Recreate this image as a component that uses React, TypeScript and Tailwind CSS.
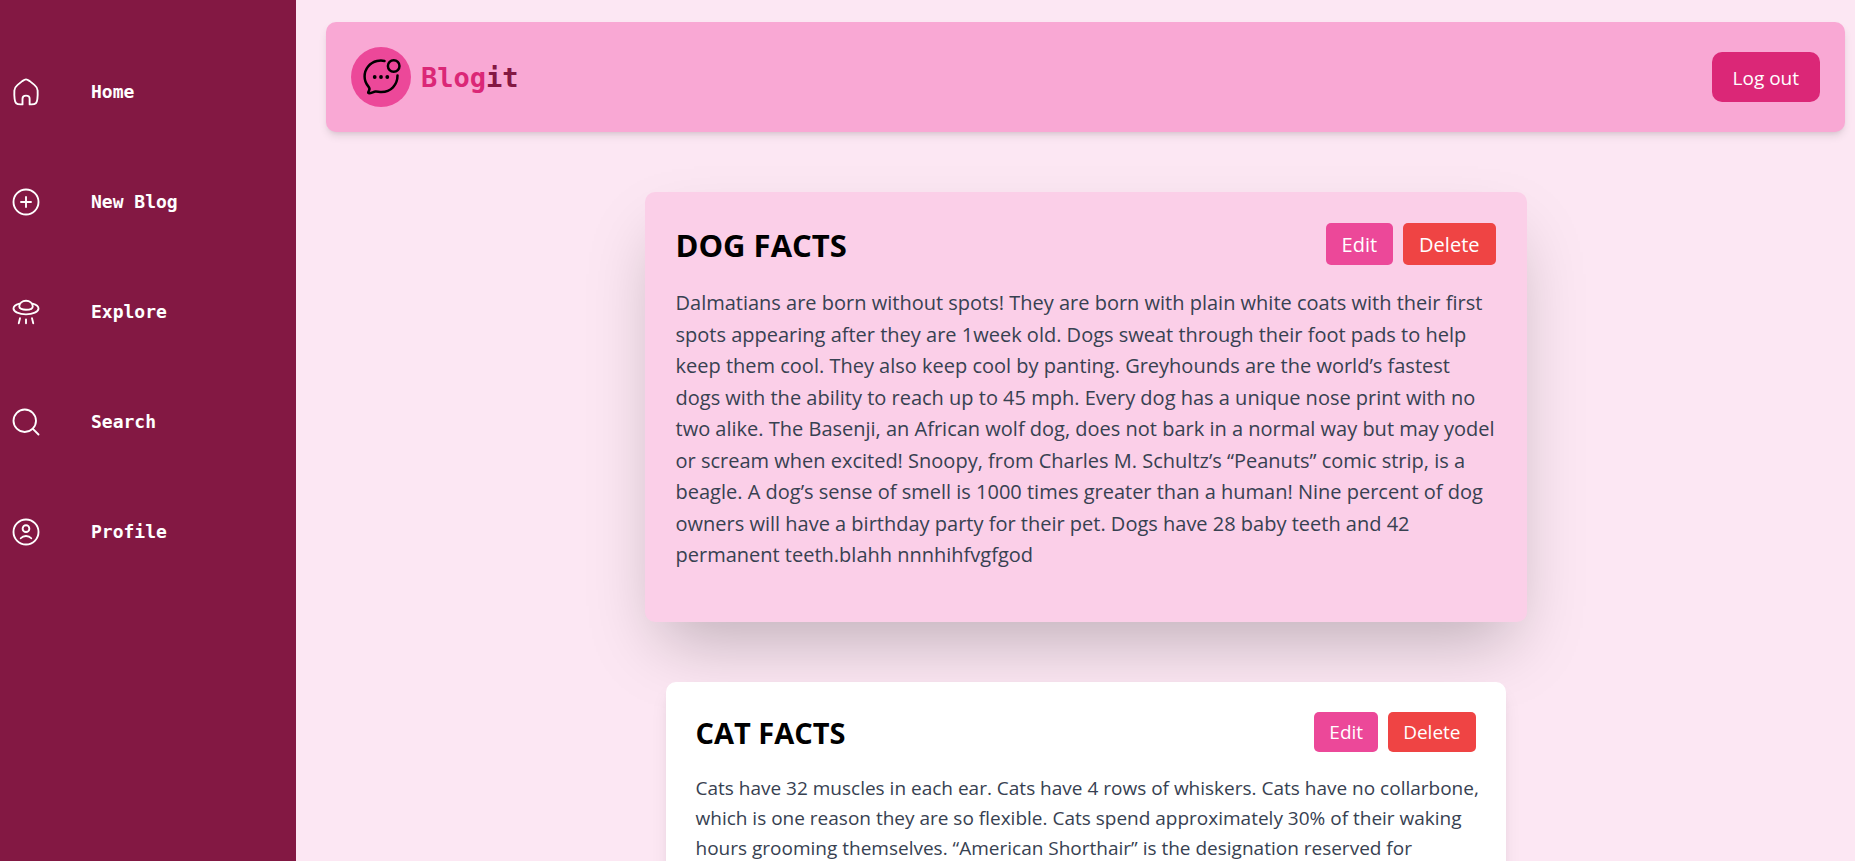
import type { ReactNode } from "react";

function Icon({ children }: { children: ReactNode }) {
  return (
    <svg
      className="size-[30px] shrink-0"
      viewBox="0 0 24 24"
      fill="none"
      stroke="currentColor"
      strokeWidth="1.5"
      strokeLinecap="round"
      strokeLinejoin="round"
      aria-hidden="true"
    >
      {children}
    </svg>
  );
}

const links: { label: string; icon: ReactNode }[] = [
  {
    label: "Home",
    icon: (
      <path d="M9.2 21.9H7.6C4.2 21.9 3.3 20.9 2.9 17.6C2.6 14.8 2.6 12.6 2.7 10.8C2.8 8.8 3.6 7.7 5.3 6.3L9 3.3C10.4 2.3 11.1 1.9 12 1.9C12.9 1.9 13.6 2.3 15 3.3L18.7 6.3C20.4 7.7 21.2 8.8 21.3 10.8C21.4 12.6 21.4 14.8 21.1 17.6C20.7 20.9 19.8 21.9 16.4 21.9H14.9V17.4C14.9 15.7 14.2 14.9 12 14.9C9.8 14.9 9.2 15.7 9.2 17.4Z" />
    ),
  },
  {
    label: "New Blog",
    icon: (
      <>
        <circle cx="12" cy="12" r="10" />
        <path d="M12 8V16M16 12H8" />
      </>
    ),
  },
  {
    label: "Explore",
    icon: (
      <>
        <path d="M17.2 5.3C20.1 6.1 22 7.500 22 9.200C22 11.800 17.5 13.900 12 13.900C6.500 13.900 2 11.800 2 9.200C2 7.500 3.900 6.100 6.800 5.300" />
        <path d="M6.600 7.600C6.600 5 9 3 12 3C15 3 17.400 5 17.400 7.600C17.400 9.300 15 10.200 12 10.200C9 10.200 6.600 9.300 6.600 7.600Z" />
        <path d="M12 18V21M7.200 17L6.200 21M16.800 17L17.800 21" />
      </>
    ),
  },
  {
    label: "Search",
    icon: (
      <>
        <circle cx="11" cy="11" r="9" />
        <path d="M17.500 17.500L22 22" />
      </>
    ),
  },
  {
    label: "Profile",
    icon: (
      <>
        <circle cx="12" cy="12" r="10" />
        <circle cx="12" cy="9.300" r="2.700" />
        <path d="M7.800 17C9.900 14.600 14.100 14.600 16.200 17" />
      </>
    ),
  },
];

function Logo() {
  return (
    <svg className="size-15 shrink-0" viewBox="0 0 60 60" fill="none" aria-hidden="true">
      <circle cx="30" cy="30" r="30" fill="#ec4899" />
      <g stroke="#000" strokeWidth="2.500" strokeLinecap="round" strokeLinejoin="round">
        <path d="M33.500 13.900C31 13.400 28.500 13.400 26 14C18.800 15.600 13.600 22 13.600 29.500C13.600 33.300 14.900 36.600 17.300 39.300C18.700 40.900 19 42 18 43.600C17.300 44.700 16.600 46.300 18.200 46.300C20.500 46.300 22.300 44.900 24.500 44.600C26.500 44.500 28 45 30.500 45C39.700 45 46.500 38 46.500 28.500" />
        <circle cx="42.700" cy="19" r="5.800" />
      </g>
      <g fill="#000">
        <circle cx="23.700" cy="30" r="1.900" />
        <circle cx="30" cy="30" r="1.900" />
        <circle cx="36.300" cy="30" r="1.900" />
      </g>
    </svg>
  );
}

const dogFacts =
  "Dalmatians are born without spots! They are born with plain white coats with their first spots appearing after they are 1week old. Dogs sweat through their foot pads to help keep them cool. They also keep cool by panting. Greyhounds are the world’s fastest dogs with the ability to reach up to 45 mph. Every dog has a unique nose print with no two alike. The Basenji, an African wolf dog, does not bark in a normal way but may yodel or scream when excited! Snoopy, from Charles M. Schultz’s “Peanuts” comic strip, is a beagle. A dog’s sense of smell is 1000 times greater than a human! Nine percent of dog owners will have a birthday party for their pet. Dogs have 28 baby teeth and 42 permanent teeth.blahh nnnhihfvgfgod";

const catFacts =
  "Cats have 32 muscles in each ear. Cats have 4 rows of whiskers. Cats have no collarbone, which is one reason they are so flexible. Cats spend approximately 30% of their waking hours grooming themselves. “American Shorthair” is the designation reserved for";

export default function App() {
  return (
    <div className="flex h-screen overflow-hidden bg-[#fce7f3] font-['Open_Sans',sans-serif]">
      <nav className="w-74 shrink-0 bg-[#831843] pt-[62px] text-white">
        <ul className="flex flex-col gap-[50px]">
          {links.map((link) => (
            <li key={link.label}>
              <a
                href="#"
                className="flex h-[60px] items-center gap-[50px] pl-[11px] font-['DejaVu_Sans_Mono',monospace] text-[18px] font-bold"
              >
                <Icon>{link.icon}</Icon>
                <span className="pb-[2px]">{link.label}</span>
              </a>
            </li>
          ))}
        </ul>
      </nav>

      <main className="min-w-0 grow pt-[22px] pr-[10px] pl-[30px]">
        <header className="flex items-center justify-between rounded-[10px] bg-[#f9a8d4] p-[25px] shadow-[0_5px_8px_-1px_rgba(0,0,0,0.1),0_3px_5px_-3px_rgba(0,0,0,0.1)]">
          <div className="flex items-center gap-[10px]">
            <Logo />
            <span className="pt-[2px] font-['DejaVu_Sans_Mono',monospace] text-[27px] font-bold text-[#831843]">
              <span className="text-[#db2777]">Blog</span>it
            </span>
          </div>
          <button type="button" className="h-[50px] rounded-[10px] bg-[#db2777] px-[21px] pt-[2px] text-[19px] text-white">
            Log out
          </button>
        </header>

        <div className="mt-15 flex flex-col items-center gap-15">
          <article className="w-full max-w-[882px] rounded-[10px] bg-[#fbcfe8] px-[31px] pt-[31px] pb-[51px] shadow-[0_33px_66px_-16px_rgba(0,0,0,0.25)]">
            <div className="mb-[22px] flex h-[42px] items-center justify-between">
              <h2 className="pt-[2px] text-[31px] leading-10 font-bold text-black">DOG FACTS</h2>
              <div className="flex gap-[10px] text-[20px] text-white">
                <button type="button" className="h-[42px] rounded-[5px] bg-[#ec4899] px-4 pt-[2px]">
                  Edit
                </button>
                <button type="button" className="h-[42px] rounded-[5px] bg-[#ef4444] px-4 pt-[2px]">
                  Delete
                </button>
              </div>
            </div>
            <p className="text-[20px] leading-[1.575] text-[#374151]">{dogFacts}</p>
          </article>

          <article className="w-full max-w-[840px] rounded-[10px] bg-white pt-[30px] pr-[26px] pb-[50px] pl-[30px] shadow-[0_12px_19px_-4px_rgba(0,0,0,0.1),0_5px_8px_-5px_rgba(0,0,0,0.1)]">
            <div className="mr-1 mb-[21px] flex h-10 items-center justify-between">
              <h2 className="pt-[2px] text-[29px] leading-10 font-bold text-black">CAT FACTS</h2>
              <div className="flex gap-[10px] text-[19px] text-white">
                <button type="button" className="h-10 rounded-[5px] bg-[#ec4899] px-[15px] pt-[2px]">
                  Edit
                </button>
                <button type="button" className="h-10 rounded-[5px] bg-[#ef4444] px-[15px] pt-[2px]">
                  Delete
                </button>
              </div>
            </div>
            <p className="text-[19px] leading-[30px] text-[#374151]">{catFacts}</p>
          </article>
        </div>
      </main>
    </div>
  );
}
